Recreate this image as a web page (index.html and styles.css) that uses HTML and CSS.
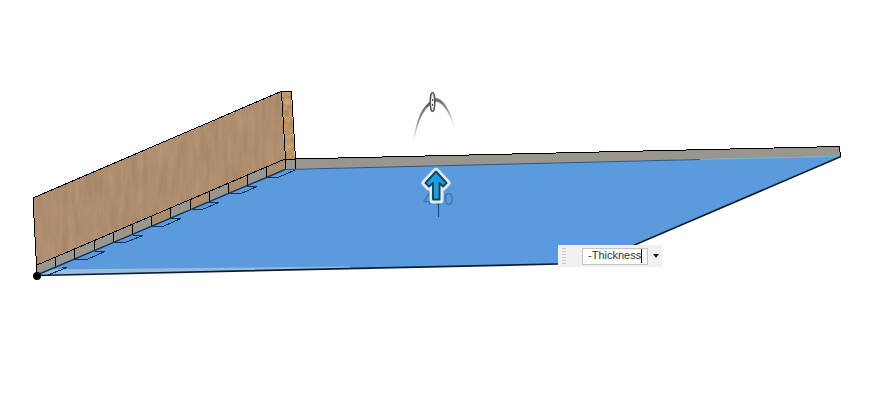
FILE: index.html
```html
<!DOCTYPE html>
<html lang="en">
<head>
<meta charset="utf-8">
<title>Extrude</title>
<link rel="stylesheet" href="styles.css">
</head>
<body>
<main class="viewport">
<svg class="scene" width="875" height="405" viewBox="0 0 875 405">
  <defs>
    <filter id="wood" x="0" y="0" width="100%" height="100%" color-interpolation-filters="sRGB">
      <feTurbulence type="fractalNoise" baseFrequency="0.16 0.03" numOctaves="3" seed="4"/>
      <feColorMatrix values="0.09 0 0 0 0.635  0.09 0 0 0 0.510  0.09 0 0 0 0.385  0 0 0 0 1"/>
      <feComposite in2="SourceGraphic" operator="in"/>
    </filter>
    <filter id="grain" x="0" y="0" width="100%" height="100%" color-interpolation-filters="sRGB">
      <feTurbulence type="fractalNoise" baseFrequency="0.2" numOctaves="2" seed="8"/>
      <feColorMatrix values="0.25 0 0 0 0.62  0.25 0 0 0 0.46  0.25 0 0 0 0.28  0 0 0 0 1"/>
      <feComposite in2="SourceGraphic" operator="in"/>
    </filter>
    <linearGradient id="arcL" x1="0" y1="0" x2="0" y2="1"><stop offset="0" stop-color="#555"/><stop offset=".5" stop-color="#999"/><stop offset="1" stop-color="#f4f4f4"/></linearGradient>
    <linearGradient id="arcR" x1="0" y1="0" x2="0" y2="1"><stop offset="0" stop-color="#666"/><stop offset=".5" stop-color="#bbb"/><stop offset="1" stop-color="#fff"/></linearGradient>
  </defs>
  <path class="face" d="M37 275 285 169 841 156 590 263 558 264Z"/>
  <path class="band" d="M50 269.500 350 266.500V268.500L37 275.500Z"/>
  <path class="slab" d="M285 159 839 146.500 841 156 295 169 285 169Z"/>
  <path class="slab" d="M37 265 285 159V169L37 275Z"/>
  <path filter="url(#wood)" d="M33 198 281 92 285 159 37 265Z"/>
  <path filter="url(#grain)" d="M281 92H291L295 159H285Z"/>
  <path class="tile" d="M151 216 170.500 208V218L151 226ZM190 200 209 191V201L190 210ZM228 183 247.500 175V185L228 193ZM266.500 167 285 159V169L266.500 177Z"/>
  <path class="tile-soft" d="M132 224V234L118 240Z"/>
  <path class="edge" shape-rendering="crispEdges" d="M37 275 36.500 265 33 198 281 91.500H291.500L295.500 159V169M281.500 92 285.500 159V169M37 265 285 159H295L839 146.500 841 156.500M55.500 257V268M74.500 249V260M94.500 241V251M113.500 232V243M132.500 224V235M151.500 216V227M170.500 208V219M190.500 200V210M209.500 191V202M228.500 183V194M247.500 175V186M266.500 167V178"/>
  <path class="seam" d="M37 275 285 169.500"/>
  <path class="seam-thin" d="M285 169.500 700 159.500"/>
  <path class="seam-light" d="M700 159.500 840 156.500"/>
  <path class="outline" d="M841 156.500 590 264M37 275.500 558 264"/>
  <path class="tick" shape-rendering="crispEdges" d="M48 275 67 267.500H62M75 259.500H87L105 251.500H95M113 242.500H125L143 235.500H133M152 226.500H163L181 218.500H171M190 209.500H202L219 202.500H209M228 193.500H241L257 186.500H247M267 177.500H278L295 170"/>
  <circle cx="37" cy="276" r="4"/>
  <path fill="url(#arcL)" d="M413.500 144Q416 108 434 99L438 101Q420 105 413.500 144Z"/>
  <path fill="url(#arcR)" d="M435 98Q448 98 456 133Q447 103 435 101Z"/>
  <ellipse class="handle" cx="432.500" cy="102" rx="2.300" ry="9.500"/>
  <path class="handle-mark" d="M432.500 99V101M432.500 104V106"/>
  <text class="dimension" x="423" y="205">400</text>
  <path class="pointer" d="M438.500 199V217"/>
  <path class="arrow-glow" d="M436 171.500 447 183 443 187 440 184V200H433V184L429 187 425 183Z"/>
  <path class="arrow" d="M436 171.500 446.500 183 443 186.500 439.500 183V199.500H433V183L429 186.500 425.500 183Z"/>
</svg>
<div class="value-box">
  <span class="grip"></span>
  <div class="field"><span class="value">-Thickness</span><span class="caret"></span></div>
  <span class="drop"></span>
</div>
</main>
</body>
</html>
```
FILE: styles.css
```css
body { margin: 0; background: #fff; }
.viewport { position: relative; width: 875px; height: 405px; overflow: hidden; }
.scene { display: block; }
.face { fill: #5b9bdd; }
.band { fill: #98bcdf; }
.slab { fill: #99968f; }
.tile { fill: #aa8d6f; }
.tile-soft { fill: #a8937a; }
.edge { fill: none; stroke: #000; stroke-width: 1; }
.seam { stroke: #18324c; stroke-width: 1.4; }
.seam-thin { stroke: #2d5878; stroke-width: 1; }
.seam-light { stroke: #5bb9dc; stroke-width: 1; }
.outline { fill: none; stroke: #0b1d33; stroke-width: 1.7; }
.tick { fill: none; stroke: #123256; stroke-width: 1; }
.handle { fill: #eee; stroke: #555; stroke-width: 1.5; }
.handle-mark { stroke: #444; stroke-width: 1; }
.dimension { font: 17px "Liberation Sans", Arial, sans-serif; letter-spacing: 1px; fill: #3f75ad; }
.pointer { stroke: #17436f; stroke-width: 1; }
.arrow-glow { fill: #dcebf8; stroke: #dcebf8; stroke-width: 7; stroke-linejoin: round; }
.arrow { fill: #1b9ee2; stroke: #174563; stroke-width: 2; stroke-linejoin: round; }
.value-box { position: absolute; left: 558px; top: 245px; width: 104px; height: 22px; box-sizing: border-box; padding-left: 4px; display: flex; align-items: center; background: #f1f1f1; }
.grip { width: 4px; height: 18px; margin-right: 16px; background: radial-gradient(circle, #ccc 0.7px, transparent 1px) 0 0 / 2px 3px; }
.field { box-sizing: border-box; width: 66px; height: 17px; padding-left: 5px; display: flex; align-items: center; border: 1px solid #c4c4c4; background: #fff; font: 11px "Liberation Sans", Arial, sans-serif; color: #333; }
.value { padding-bottom: 2px; }
.caret { width: 1px; height: 14px; background: #000; }
.drop { margin-left: 5px; border: 3px solid transparent; border-top: 4px solid #222; border-bottom: 0; }
```
